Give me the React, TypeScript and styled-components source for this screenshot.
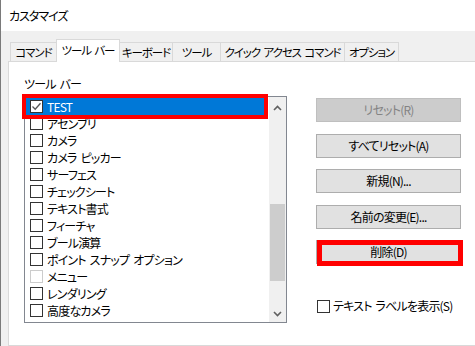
import React from "react";
import styled, { createGlobalStyle } from "styled-components";

const Global = createGlobalStyle`
  html, body { margin: 0; padding: 0; background: #f0f0f0; }
  body { font-family: "Noto Sans CJK JP", sans-serif; }
`;

const Window = styled.div`
  width: 475px;
  height: 346px;
  overflow: hidden;
  box-sizing: border-box;
  border-left: 1px solid #7a7a7a;
  background: #f0f0f0;
  display: flex;
  flex-direction: column;
  font-family: "Noto Sans CJK JP", "Noto Sans", sans-serif;
  font-feature-settings: "palt" 1;
  font-size: 12px;
  letter-spacing: -0.8px;
  word-spacing: 2px;
  color: #000;
`;

const TitleBar = styled.div`
  height: 31px;
  flex: none;
  background: #fff;
  display: flex;
  align-items: center;
  padding-left: 8px;
  line-height: 16px;
  letter-spacing: -1px;
`;

const Body = styled.div`
  flex: 1;
  display: flex;
  flex-direction: column;
  padding: 8px 0 0 7px;
  min-height: 0;
`;

const TabStrip = styled.div`
  display: flex;
  align-items: flex-end;
  height: 23px;
  padding-left: 2px;
  margin-bottom: -1px;
  position: relative;
  z-index: 1;
`;

const Tab = styled.div<{ $w: number; $active?: boolean }>`
  box-sizing: border-box;
  width: ${(p) => p.$w}px;
  height: ${(p) => (p.$active ? 23 : 20)}px;
  margin-right: -1px;
  border: 1px solid #d9d9d9;
  border-bottom: ${(p) => (p.$active ? "none" : "1px solid #d9d9d9")};
  background: ${(p) => (p.$active ? "#fff" : "#f0f0f0")};
  position: relative;
  z-index: ${(p) => (p.$active ? 2 : 1)};
  display: flex;
  align-items: center;
  justify-content: center;
  padding-bottom: ${(p) => (p.$active ? 2 : 0)}px;
  white-space: nowrap;
  line-height: 16px;
  font-size: 11.5px;
  letter-spacing: -1.1px;
  word-spacing: 2px;
`;

const Panel = styled.div`
  flex: 1;
  margin-right: -20px;
  background: #fff;
  border: 1px solid #d9d9d9;
  display: flex;
  align-items: flex-start;
  padding: 13px 0 0 15px;
`;

const LeftCol = styled.div`
  display: flex;
  flex-direction: column;
  width: 263px;
`;

const SectionLabel = styled.div`
  height: 17px;
  line-height: 17px;
  margin-bottom: 4px;
`;

const ListBox = styled.div`
  position: relative;
  box-sizing: border-box;
  width: 263px;
  height: 227px;
  border: 1px solid #828790;
  background: #fff;
  display: flex;
`;

const Items = styled.div`
  flex: 1;
  display: flex;
  flex-direction: column;
  padding: 1px 5px 0 1px;
`;

const Row = styled.div<{ $selected?: boolean }>`
  position: relative;
  height: 17px;
  flex: none;
  display: flex;
  align-items: center;
  gap: 4px;
  padding-left: 4px;
  background: ${(p) => (p.$selected ? "#0078d7" : "transparent")};
  color: ${(p) => (p.$selected ? "#fff" : "#000")};
  white-space: nowrap;
  line-height: 16px;
`;

const Box = styled.span<{ $disabled?: boolean }>`
  box-sizing: border-box;
  flex: none;
  width: 13px;
  height: 13px;
  border: 1px solid ${(p) => (p.$disabled ? "#cccccc" : "#333333")};
  background: #fff;
  display: flex;
  align-items: center;
  justify-content: center;
`;

const Scrollbar = styled.div`
  width: 17px;
  flex: none;
  background: #f0f0f0;
  display: flex;
  flex-direction: column;
`;

const ArrowBtn = styled.div<{ $h: number }>`
  height: ${(p) => p.$h}px;
  flex: none;
  display: flex;
  align-items: center;
  justify-content: center;
`;

const Track = styled.div`
  flex: 1;
  display: flex;
  flex-direction: column;
`;

const Thumb = styled.div`
  margin: 85px 1px 0 1px;
  height: 77px;
  background: #cdcdcd;
`;

const Highlight = styled.div<{ $t: number; $r: number; $b: number; $l: number; $bw: number }>`
  position: absolute;
  top: ${(p) => p.$t}px;
  right: ${(p) => p.$r}px;
  bottom: ${(p) => p.$b}px;
  left: ${(p) => p.$l}px;
  border: ${(p) => p.$bw}px solid #ff0000;
  pointer-events: none;
  z-index: 3;
`;

const RightCol = styled.div`
  display: flex;
  flex-direction: column;
  gap: 11.5px;
  margin: 23px 0 0 29px;
  width: 145px;
`;

const Button = styled.div<{ $disabled?: boolean }>`
  position: relative;
  box-sizing: border-box;
  height: 24px;
  width: 145px;
  border: 1px solid ${(p) => (p.$disabled ? "#bfbfbf" : "#adadad")};
  background: ${(p) => (p.$disabled ? "#cccccc" : "#e1e1e1")};
  color: ${(p) => (p.$disabled ? "#838383" : "#000")};
  display: flex;
  align-items: center;
  justify-content: center;
  line-height: 16px;
  white-space: nowrap;
`;

const CheckOption = styled.div`
  display: flex;
  align-items: center;
  gap: 3px;
  margin: 22.5px 0 0 1px;
  line-height: 16px;
  white-space: nowrap;
`;

const Check = () => (
  <svg width="11" height="11" viewBox="0 0 11 11">
    <polyline points="1.5,5.5 4.2,8.2 9.5,2.2" fill="none" stroke="#555" strokeWidth="1.3" />
  </svg>
);

const Chevron = ({ down }: { down?: boolean }) => (
  <svg width="9" height="6" viewBox="0 0 9 6">
    <polyline
      points={down ? "1,1 4.5,4.5 8,1" : "1,5 4.5,1.5 8,5"}
      fill="none"
      stroke="#606060"
      strokeWidth="1.6"
    />
  </svg>
);

const tabs = [
  { label: "コマンド", w: 47 },
  { label: "ツール バー", w: 64, active: true },
  { label: "キーボード", w: 54 },
  { label: "ツール", w: 49 },
  { label: "クイック アクセス コマンド", w: 125 },
  { label: "オプション", w: 55 },
];

const items = [
  { label: "TEST", checked: true, selected: true },
  { label: "アセンブリ" },
  { label: "カメラ" },
  { label: "カメラ ピッカー" },
  { label: "サーフェス" },
  { label: "チェックシート" },
  { label: "テキスト書式" },
  { label: "フィーチャ" },
  { label: "ブール演算" },
  { label: "ポイント スナップ オプション" },
  { label: "メニュー", disabled: true },
  { label: "レンダリング" },
  { label: "高度なカメラ" },
];

export default function App() {
  return (
    <>
      <Global />
      <Window>
        <TitleBar>カスタマイズ</TitleBar>
        <Body>
          <TabStrip>
            {tabs.map((t) => (
              <Tab key={t.label} $w={t.w} $active={t.active}>
                {t.label}
              </Tab>
            ))}
          </TabStrip>
          <Panel>
            <LeftCol>
              <SectionLabel>ツール バー</SectionLabel>
              <ListBox>
                <Items>
                  {items.map((it) => (
                    <Row key={it.label} $selected={it.selected}>
                      <Box $disabled={it.disabled}>{it.checked && <Check />}</Box>
                      <span>{it.label}</span>
                      {it.selected && <Highlight $t={-4} $r={-4} $b={-4} $l={-4} $bw={4} />}
                    </Row>
                  ))}
                </Items>
                <Scrollbar>
                  <ArrowBtn $h={22}>
                    <Chevron />
                  </ArrowBtn>
                  <Track>
                    <Thumb />
                  </Track>
                  <ArrowBtn $h={17}>
                    <Chevron down />
                  </ArrowBtn>
                </Scrollbar>
              </ListBox>
            </LeftCol>
            <RightCol>
              <Button $disabled>リセット(R)</Button>
              <Button>すべてリセット(A)</Button>
              <Button>新規(N)...</Button>
              <Button>名前の変更(E)...</Button>
              <Button>
                削除(D)
                <Highlight $t={-1} $r={-3} $b={-3} $l={0} $bw={5} />
              </Button>
              <CheckOption>
                <Box />
                <span>テキスト ラベルを表示(S)</span>
              </CheckOption>
            </RightCol>
          </Panel>
        </Body>
      </Window>
    </>
  );
}
